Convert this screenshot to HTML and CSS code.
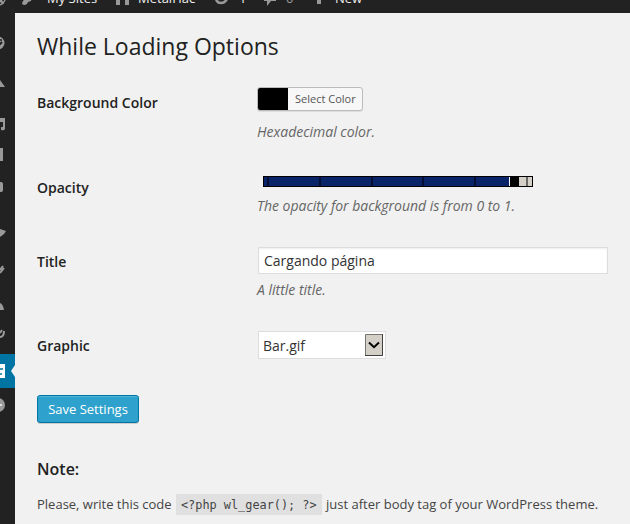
FILE: index.html
```html
<!DOCTYPE html>
<html lang="en">
<head>
<meta charset="utf-8">
<title>While Loading Options</title>
<link rel="stylesheet" href="styles.css">
</head>
<body>
<header class="adminbar">
  <svg class="bar-icon wp" width="22" height="13" viewBox="0 0 22 13"><circle cx="-3" cy="-3" r="8.500" fill="none" stroke="#999" stroke-width="1.3"/><path d="M-1 3L3-4M1 0L3 4" stroke="#999" stroke-width="2"/></svg>
  <svg class="bar-icon key" width="25" height="13" viewBox="22 0 25 13"><path d="M22 4Q22 1 26-2L32-2 31 1 28 2Q27 5 24 5Z" fill="#999"/></svg>
  <span class="bar-text sites">My Sites</span>
  <svg class="bar-icon home" width="23" height="13" viewBox="115 0 23 13"><path d="M116-4H129V5H125V0H120V5H116Z" fill="#999"/></svg>
  <span class="bar-text site">MetalHac</span>
  <svg class="bar-icon update" width="25" height="13" viewBox="214 0 25 13"><path d="M216-1Q217 3 221 3T227-1" fill="none" stroke="#999" stroke-width="2.500"/></svg>
  <span class="bar-text count">1</span>
  <svg class="bar-icon bubble" width="24" height="13" viewBox="262 0 24 13"><path d="M264-5H276V1H271L267 6V1H264Z" fill="#999"/></svg>
  <span class="bar-text zero">0</span>
  <svg class="bar-icon plus" width="18" height="13" viewBox="317 0 18 13"><path d="M317-4H321V4H317Z" fill="#999"/></svg>
  <span class="bar-text">New</span>
</header>
<div class="layout">
  <nav class="menu">
    <svg viewBox="0 13 15 50"><circle cx="-2" cy="43" r="6.500" fill="#999"/><circle cx="1" cy="40" r="1" fill="#222"/><path d="M-1 45L2 42" stroke="#222" stroke-width="2"/></svg>
    <svg viewBox="0 63 15 40"><path d="M0 80L5 87H0Z" fill="#999"/></svg>
    <svg viewBox="0 103 15 36"><path d="M0 118H5V129Q4 131 1 130V127H3V122H0Z" fill="#999"/></svg>
    <svg viewBox="0 139 15 31"><path d="M0 148H3V161H0Z" fill="#999"/></svg>
    <svg viewBox="0 170 15 40"><path d="M0 182H1Q3 182 3 184V190Q3 192 1 192H0Z" fill="#999"/></svg>
    <svg viewBox="0 210 15 40"><path d="M0 229L6 231 4 234 0 237Z" fill="#999"/></svg>
    <svg viewBox="0 250 15 40"><path d="M0 270L3 266M0 273L4 268" stroke="#999" stroke-width="2"/></svg>
    <svg viewBox="0 290 15 30"><path d="M0 303Q3 304 4 310H0Z" fill="#999"/></svg>
    <svg viewBox="0 320 15 34"><path d="M0 337Q4 337 4 331M0 333L2 330" fill="none" stroke="#999" stroke-width="2"/></svg>
    <svg class="current" viewBox="0 354 15 34"><path d="M0 364H5V378H0Z" fill="#fff"/><path d="M0 369H3M0 374H2" stroke="#0074a2" stroke-width="1.500"/><path d="M15 365V377L11 371Z" fill="#f1f1f1"/></svg>
    <svg viewBox="0 388 15 136"><circle cx="-2" cy="405" r="7" fill="#999"/><path d="M0 404H2V406H0Z" fill="#ddd"/></svg>
  </nav>
  <main class="content">
    <h2>While Loading Options</h2>
    <form>
      <div class="row row-color">
        <label>Background Color</label>
        <div class="field">
          <div class="picker"><span class="swatch"></span><span class="pick-text">Select Color</span></div>
          <p class="description">Hexadecimal color.</p>
        </div>
      </div>
      <div class="row row-opacity">
        <label>Opacity</label>
        <div class="field">
          <svg class="slider" width="270" height="11" viewBox="0 0 270 11" shape-rendering="crispEdges">
            <path fill="#000" d="M0 0H270V11H0Z"/>
            <path fill="#0a246a" d="M1 1H246V10H1Z"/>
            <path fill="#050f33" d="M4 1h2v9H4zM56 1h2v9h-2zM108 1h2v9h-2zM159 1h2v9h-2zM211 1h2v9h-2z"/>
            <path fill="#fff" d="M246 1h1v9h-1z"/>
            <path fill="#d4d0c8" d="M256 1H269V10H256Z"/>
            <path fill="#6a6864" d="M263 1h2v9h-2z"/>
          </svg>
          <p class="description">The opacity for background is from 0 to 1.</p>
        </div>
      </div>
      <div class="row row-title">
        <label>Title</label>
        <div class="field">
          <div class="input">Cargando página</div>
          <p class="description">A little title.</p>
        </div>
      </div>
      <div class="row row-graphic">
        <label>Graphic</label>
        <div class="field">
          <div class="select"><span>Bar.gif</span><svg width="18" height="22" viewBox="0 0 18 22"><path d="M.5.5H17.500V21.500H.5Z" fill="#d4d0c8" stroke="#77756f"/><path d="M17.500 0V21.500H0" fill="none" stroke="#404040"/><path d="M4 8.500L9 13.200 14 8.500" fill="none" stroke="#000" stroke-width="2"/></svg></div>
        </div>
      </div>
      <button type="button" class="save">Save Settings</button>
    </form>
    <h3>Note:</h3>
    <p class="note">Please, write this code <code>&lt;?php wl_gear(); ?&gt;</code> just after body tag of your WordPress theme.</p>
  </main>
</div>
</body>
</html>
```
FILE: styles.css
```css
* { box-sizing: border-box; }
body {
  margin: 0;
  width: 630px;
  height: 524px;
  overflow: hidden;
  background: #f1f1f1;
  color: #444;
  font: 14px/20px "Open Sans", sans-serif;
}
.adminbar {
  display: flex;
  align-items: flex-start;
  height: 13px;
  overflow: hidden;
  background: #222;
  color: #eee;
  font-size: 13px;
}
.bar-icon { flex: none; }
.bar-text { flex: none; margin-top: -12px; white-space: nowrap; }
.sites { width: 68px; }
.site { width: 76px; }
.count { width: 23px; }
.zero { width: 31px; color: #999; }
.layout { display: flex; height: 511px; }
.menu {
  flex: none;
  width: 15px;
  background: #222;
  display: grid;
  grid-template-rows: 50px 40px 36px 31px 40px 40px 40px 30px 34px 34px 136px;
}
.menu svg { display: block; width: 15px; height: 100%; }
.menu .current { background: #0074a2; }
.content { flex: 1; padding-left: 22px; min-width: 0; }
h2 {
  margin: 0;
  padding-top: 18px;
  height: 74px;
  font-size: 23px;
  line-height: 30px;
  font-weight: 400;
  color: #222;
}
.row { display: grid; grid-template-columns: 220px 351px; }
.row label { padding-top: 6px; font-weight: 600; color: #222; }
.row-color { height: 85px; }
.row-opacity { height: 75px; }
.row-title { height: 84px; }
.row-graphic { height: 64px; }
.row-title label, .row-graphic label { padding-top: 5px; }
.picker {
  display: flex;
  width: 106px;
  height: 24px;
  border: 1px solid #bbb;
  border-radius: 3px;
  background: #f7f7f7;
  box-shadow: 0 1px 0 rgba(0,0,0,.08);
  overflow: hidden;
}
.swatch { width: 30px; background: #000; }
.pick-text { padding-left: 7px; font-size: 11px; line-height: 22px; color: #555; white-space: nowrap; }
.description { margin: 0; color: #666; font-style: italic; white-space: nowrap; }
.row-color .description { padding-top: 11px; }
.row-opacity .description { padding-top: 9px; letter-spacing: -.02px; }
.row-title .description { padding-top: 6px; }
.slider { display: block; margin: 4px 0 0 6px; }
.input {
  width: 350px;
  height: 27px;
  margin: 0 0 0 1px;
  padding: 0 5px;
  border: 1px solid #ddd;
  background: #fff;
  box-shadow: inset 0 1px 2px rgba(0,0,0,.07);
  color: #333;
  line-height: 26px;
}
.select {
  display: flex;
  align-items: center;
  justify-content: space-between;
  width: 128px;
  height: 28px;
  margin: 0 0 0 1px;
  padding: 0 2px 0 4px;
  border: 1px solid #ddd;
  background: #fff;
  color: #333;
}
.select span { padding-top: 2px; }
.save {
  display: block;
  width: 102px;
  height: 28px;
  padding: 0;
  border: 1px solid #0074a2;
  border-radius: 3px;
  background: #2ea2cc;
  box-shadow: inset 0 1px 0 rgba(120,200,230,.5), 0 1px 0 rgba(0,0,0,.15);
  color: #fff;
  font: 13px/26px "Open Sans", sans-serif;
}
h3 { margin: 36px 0 0; font-size: 16px; line-height: 20px; font-weight: 600; color: #222; }
.note { margin: 15px 0 0; font-size: 13px; white-space: nowrap; }
code {
  padding: 4px 5px 3px;
  margin: 0 1px;
  background: #e0e0e0;
  font: 11.870px/16px "DejaVu Sans Mono", monospace;
}
```
